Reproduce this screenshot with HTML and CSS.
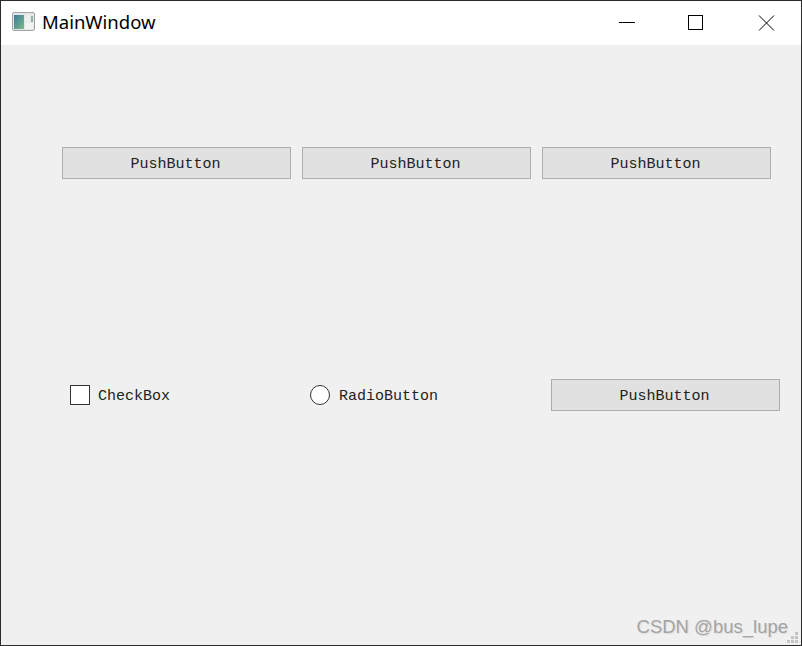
FILE: index.html
```html
<!DOCTYPE html>
<html lang="en">
<head>
  <meta charset="UTF-8">
  <meta name="viewport" content="width=device-width, initial-scale=1.0">
  <title>MainWindow</title>
  <link rel="stylesheet" href="styles.css">
</head>
<body>
  <div class="window">
    <!-- Title bar -->
    <header class="titlebar">
      <svg class="app-icon" width="23" height="19" viewBox="0 0 23 19">
        <defs>
          <linearGradient id="panel" x1="0" y1="0" x2="1" y2="1">
            <stop offset="0" stop-color="#3a7a9e"/>
            <stop offset="1" stop-color="#7dbb86"/>
          </linearGradient>
        </defs>
        <rect x="0.5" y="0.5" width="22" height="18" rx="1.5" fill="#e4e6e8" stroke="#a0a3a7"/>
        <rect x="2" y="3" width="10" height="14" fill="url(#panel)"/>
        <rect x="13" y="3" width="5" height="7" fill="#eef0f0"/>
        <rect x="13" y="11" width="8" height="6" fill="#f2f3f3"/>
        <rect x="19" y="4" width="2" height="6" fill="#8fb5a8"/>
      </svg>
      <span class="title">MainWindow</span>
      <div class="caption-buttons">
        <svg class="caption" width="70" height="44" viewBox="0 0 70 44"><path d="M28 21.5h16" stroke="#000" fill="none"/></svg>
        <svg class="caption" width="70" height="44" viewBox="0 0 70 44"><rect x="27.5" y="14.5" width="14" height="14" stroke="#000" fill="none"/></svg>
        <svg class="caption" width="70" height="44" viewBox="0 0 70 44"><path d="M28 14.5l15 15M43 14.5l-15 15" stroke="#000" fill="none"/></svg>
      </div>
    </header>

    <!-- Central widget -->
    <main class="central">
      <div class="row row-top">
        <button class="push">PushButton</button>
        <button class="push">PushButton</button>
        <button class="push">PushButton</button>
      </div>
      <div class="row row-bottom">
        <label class="option option-check"><span class="box"></span><span class="option-text">CheckBox</span></label>
        <label class="option option-radio"><span class="box round"></span><span class="option-text">RadioButton</span></label>
        <button class="push">PushButton</button>
      </div>
      <span class="watermark">CSDN @bus_lupe</span>
      <svg class="grip" width="11" height="11" viewBox="0 0 11 11" fill="#c4c4c4">
        <rect x="8" y="0" width="3" height="3"/>
        <rect x="4" y="4" width="3" height="3"/><rect x="8" y="4" width="3" height="3"/>
        <rect x="0" y="8" width="3" height="3"/><rect x="4" y="8" width="3" height="3"/><rect x="8" y="8" width="3" height="3"/>
      </svg>
    </main>
  </div>
</body>
</html>
```
FILE: styles.css
```css
/* General styling */
body {
  margin: 0;
  padding: 0;
  width: 802px;
  height: 646px;
  overflow: hidden;
}

.window {
  box-sizing: border-box;
  width: 802px;
  height: 646px;
  border: 1px solid #2b2b2b;
  display: flex;
  flex-direction: column;
  background-color: #f0f0f0;
}

/* Title bar */
.titlebar {
  height: 44px;
  flex-shrink: 0;
  background-color: #fff;
  display: flex;
  align-items: center;
  padding-left: 11px;
}

.app-icon {
  margin: 0 7px 3px 0;
}

.title {
  font-family: "Noto Sans", sans-serif;
  font-size: 18.5px;
  line-height: 42px;
  height: 44px;
  color: #000;
}

.caption-buttons {
  margin-left: auto;
  display: flex;
}

.caption {
  display: block;
}

/* Central widget */
.central {
  flex: 1;
  position: relative;
  font-family: "Liberation Mono", monospace;
  font-size: 15px;
  color: #222;
}

.row {
  display: flex;
}

.row-top {
  padding: 102px 0 0 61px;
  gap: 11px;
}

.row-bottom {
  padding: 200px 0 0 69px;
  align-items: center;
}

.push {
  box-sizing: border-box;
  width: 229px;
  height: 32px;
  padding: 2px 2px 0 0;
  background-color: #e1e1e1;
  border: 1px solid #adadad;
  font: inherit;
  color: inherit;
}

.option {
  display: flex;
  align-items: center;
  gap: 8px;
}

.option-text {
  padding-top: 2px;
}

.option-check {
  width: 240px;
}

.option-radio {
  width: 241px;
}

.option-radio .box {
  margin-right: 1px;
}

.box {
  box-sizing: border-box;
  width: 20px;
  height: 20px;
  background-color: #fff;
  border: 1px solid #333;
}

.box.round {
  border-radius: 50%;
}

/* Overlays in the bottom corner */
.watermark {
  position: absolute;
  right: 13px;
  bottom: 7px;
  font-family: "Liberation Sans", sans-serif;
  font-size: 18.5px;
  color: #a4a4a4;
  text-shadow: 1px 1px 1px #dcdcdc;
}

.grip {
  position: absolute;
  right: 3px;
  bottom: 2px;
}
```
